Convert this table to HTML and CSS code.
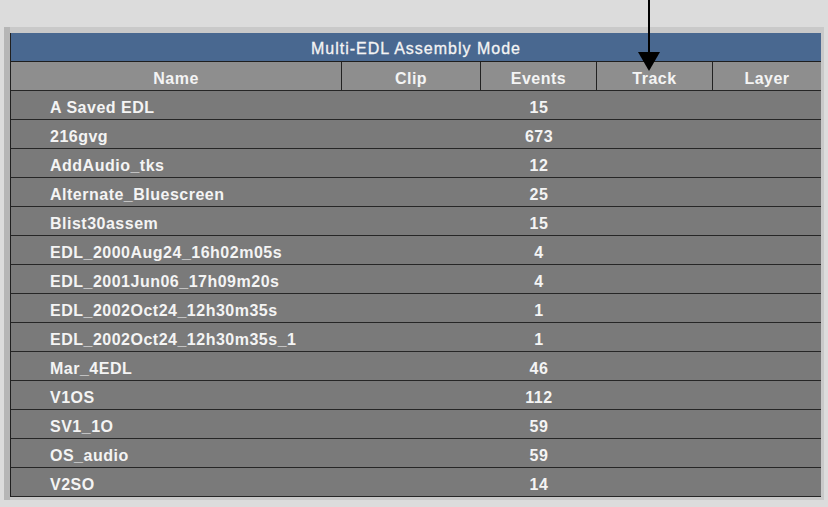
FILE: index.html
```html
<!DOCTYPE html>
<html>
<head>
<meta charset="utf-8">
<link rel="stylesheet" href="styles.css">
</head>
<body>
<div class="panel">
  <div class="table">
    <div class="title">Multi-EDL Assembly Mode</div>
    <div class="row head">
      <div class="c name">Name</div>
      <div class="c clip">Clip</div>
      <div class="c events">Events</div>
      <div class="c track">Track</div>
      <div class="c layer">Layer</div>
    </div>
    <div class="row"><div class="c name">A Saved EDL</div><div class="c clip"></div><div class="c events">15</div><div class="c track"></div><div class="c layer"></div></div>
    <div class="row"><div class="c name">216gvg</div><div class="c clip"></div><div class="c events">673</div><div class="c track"></div><div class="c layer"></div></div>
    <div class="row"><div class="c name">AddAudio_tks</div><div class="c clip"></div><div class="c events">12</div><div class="c track"></div><div class="c layer"></div></div>
    <div class="row"><div class="c name">Alternate_Bluescreen</div><div class="c clip"></div><div class="c events">25</div><div class="c track"></div><div class="c layer"></div></div>
    <div class="row"><div class="c name">Blist30assem</div><div class="c clip"></div><div class="c events">15</div><div class="c track"></div><div class="c layer"></div></div>
    <div class="row"><div class="c name">EDL_2000Aug24_16h02m05s</div><div class="c clip"></div><div class="c events">4</div><div class="c track"></div><div class="c layer"></div></div>
    <div class="row"><div class="c name">EDL_2001Jun06_17h09m20s</div><div class="c clip"></div><div class="c events">4</div><div class="c track"></div><div class="c layer"></div></div>
    <div class="row"><div class="c name">EDL_2002Oct24_12h30m35s</div><div class="c clip"></div><div class="c events">1</div><div class="c track"></div><div class="c layer"></div></div>
    <div class="row"><div class="c name">EDL_2002Oct24_12h30m35s_1</div><div class="c clip"></div><div class="c events">1</div><div class="c track"></div><div class="c layer"></div></div>
    <div class="row"><div class="c name">Mar_4EDL</div><div class="c clip"></div><div class="c events">46</div><div class="c track"></div><div class="c layer"></div></div>
    <div class="row"><div class="c name">V1OS</div><div class="c clip"></div><div class="c events">112</div><div class="c track"></div><div class="c layer"></div></div>
    <div class="row"><div class="c name">SV1_1O</div><div class="c clip"></div><div class="c events">59</div><div class="c track"></div><div class="c layer"></div></div>
    <div class="row"><div class="c name">OS_audio</div><div class="c clip"></div><div class="c events">59</div><div class="c track"></div><div class="c layer"></div></div>
    <div class="row"><div class="c name">V2SO</div><div class="c clip"></div><div class="c events">14</div><div class="c track"></div><div class="c layer"></div></div>
  </div>
</div>
<svg class="arrow" width="24" height="72" viewBox="0 0 24 72">
  <line x1="12" y1="0" x2="12" y2="56" stroke="#000" stroke-width="2"/>
  <polygon points="1,52 23,52 12,71" fill="#000"/>
</svg>
</body>
</html>
```
FILE: styles.css
```css
html, body {
  margin: 0;
  padding: 0;
  background: #dcdcdc;
  width: 828px;
  height: 507px;
  overflow: hidden;
}
body {
  position: relative;
  font-family: "Liberation Sans", Arial, sans-serif;
  font-size: 16px;
  font-weight: bold;
  letter-spacing: 0.5px;
  color: #f4f4f4;
}
.panel {
  margin: 27px 0 0 4px;
  width: 820px;
  height: 473px;
  box-sizing: border-box;
  padding: 6px 4px 0 0;
  background: #c9c9c9;
  border-left: 6px solid #b6b6b6;
}
.table {
  width: 810px;
  border-left: 1px solid #202020;
  background: #7a7a7a;
}
.title {
  height: 28px;
  line-height: 31px;
  background: #496890;
  border-bottom: 1px solid #1e1e1e;
  text-align: center;
  font-weight: normal;
  letter-spacing: 1px;
  -webkit-text-stroke: 0.3px #f4f4f4;
  overflow: hidden;
}
.row {
  display: grid;
  grid-template-columns: 331px 139px 116px 116px 108px;
  height: 28px;
  line-height: 33px;
  border-bottom: 1px solid #262626;
  background: #7a7a7a;
  overflow: hidden;
}
.row.head {
  background: #8e8e8e;
}
.head .c {
  border-right: 1px solid #222;
  text-align: center;
}
.head .c.layer {
  border-right: none;
}
.c {
  overflow: hidden;
  white-space: nowrap;
}
.row .name {
  padding-left: 39px;
}
.head .name {
  padding-left: 0;
}
.events {
  text-align: center;
}
.arrow {
  position: absolute;
  left: 637px;
  top: 0;
}
```
